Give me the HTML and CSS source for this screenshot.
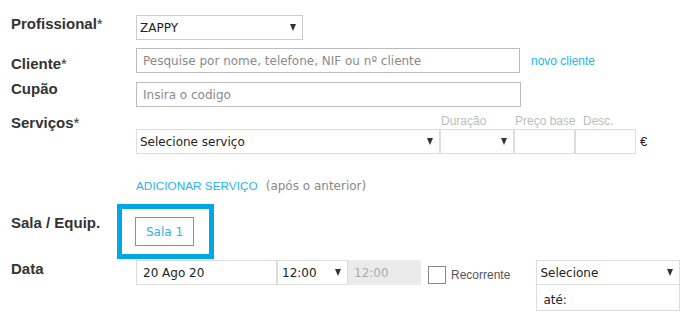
FILE: index.html
```html
<!DOCTYPE html>
<html lang="pt">
<head>
    <meta charset="UTF-8">
    <meta name="viewport" content="width=device-width, initial-scale=1.0">
    <title>Nova marcação</title>
    <link rel="stylesheet" href="styles.css">
</head>
<body>
    <div class="booking-form">
        <div class="row row-prof">
            <div class="label">Profissional<span class="req">*</span></div>
            <div class="field">
                <div class="select select-prof"><span>ZAPPY</span><i class="arrow"></i></div>
            </div>
        </div>

        <div class="row row-client">
            <div class="label">Cliente<span class="req">*</span></div>
            <div class="field field-center">
                <div class="input input-client placeholder">Pesquise por nome, telefone, NIF ou nº cliente</div>
                <a class="link new-client">novo cliente</a>
            </div>
        </div>

        <div class="row row-coupon">
            <div class="label">Cupão</div>
            <div class="field">
                <div class="input input-coupon placeholder">Insira o codigo</div>
            </div>
        </div>

        <div class="row row-services">
            <div class="label">Serviços<span class="req">*</span></div>
            <div class="field field-col">
                <div class="service-heads">
                    <span class="head head-service"></span>
                    <span class="head head-dur">Duração</span>
                    <span class="head head-price">Preço base</span>
                    <span class="head head-desc">Desc.</span>
                </div>
                <div class="service-line">
                    <div class="select light s-service"><span>Selecione serviço</span><i class="arrow"></i></div>
                    <div class="select light s-dur"><span></span><i class="arrow"></i></div>
                    <div class="input light s-price"></div>
                    <div class="input light s-desc"></div>
                    <span class="euro">€</span>
                </div>
            </div>
        </div>

        <div class="row row-add">
            <div class="label"></div>
            <div class="field">
                <a class="link add-service">ADICIONAR SERVIÇO</a>
                <span class="hint">(após o anterior)</span>
            </div>
        </div>

        <div class="row row-room">
            <div class="label">Sala / Equip.</div>
            <div class="field">
                <button class="room-btn highlighted">Sala 1</button>
            </div>
        </div>

        <div class="row row-date">
            <div class="label">Data</div>
            <div class="field">
                <div class="input light d-date">20 Ago 20</div>
                <div class="select light d-time"><span>12:00</span><i class="arrow"></i></div>
                <div class="input light d-end">12:00</div>
                <span class="checkbox"></span>
                <span class="recurring">Recorrente</span>
                <div class="repeat">
                    <div class="select light d-repeat"><span>Selecione</span><i class="arrow"></i></div>
                    <div class="input light d-until">até:</div>
                </div>
            </div>
        </div>
    </div>
</body>
</html>
```

FILE: styles.css
```css
body {
    margin: 0;
    padding: 0 0 0 11px;
    font-family: "DejaVu Sans", Verdana, sans-serif;
    font-size: 12px;
    color: #222;
    background: #fff;
}
.row {
    display: flex;
    align-items: flex-start;
}
.label {
    width: 125px;
    flex: none;
    font-family: "Liberation Sans", Arial, sans-serif;
    font-weight: bold;
    font-size: 15px;
    line-height: 17px;
    color: #333;
}
.req {
    font-weight: normal;
}
.field {
    display: flex;
    align-items: flex-start;
}
.field-center {
    align-items: center;
}
.field-col {
    flex-direction: column;
}

/* fake form controls */
.select, .input {
    box-sizing: border-box;
    height: 25px;
    border: 1px solid #bbb;
    display: flex;
    align-items: center;
    line-height: 14px;
    white-space: nowrap;
    background: #fff;
}
.select {
    justify-content: space-between;
    padding: 0 6px 0 3px;
    border-color: #ccc;
}
.input {
    padding: 0 6px;
}
.light {
    border-color: #ddd;
}
.placeholder {
    color: #8a8a8a;
}
.arrow {
    width: 0;
    height: 0;
    border-left: 3px solid transparent;
    border-right: 3px solid transparent;
    border-top: 7px solid #333;
}

.row-prof { margin-top: 15px; }
.select-prof { width: 167px; }

.row-client { margin-top: 8px; }
.row-client .label { padding-top: 7px; }
.input-client { width: 384px; }
.link {
    font-family: "Liberation Sans", Arial, sans-serif;
    color: #29b3e3;
    cursor: pointer;
}
.new-client {
    margin-left: 11px;
    font-size: 12px;
}

.row-coupon { margin-top: 9px; }
.row-coupon .label { margin-top: -2px; }
.input-coupon { width: 385px; }

.row-services { margin-top: 7px; }
.service-heads {
    display: flex;
    height: 15px;
    font-family: "Liberation Sans", Arial, sans-serif;
    font-size: 12px;
    line-height: 14px;
    color: #bdbdbd;
    white-space: nowrap;
}
.head { flex: none; }
.head-service { width: 304px; }
.head-dur { width: 74px; padding-left: 1px; box-sizing: border-box; }
.head-price { width: 61px; padding-left: 1px; box-sizing: border-box; }
.head-desc { padding-left: 8px; }
.service-line {
    display: flex;
    align-items: center;
}
.s-service { width: 304px; }
.s-dur { width: 74px; }
.s-price, .s-desc { width: 61px; }
.euro {
    margin-left: 4px;
    font-family: "Liberation Sans", Arial, sans-serif;
    font-size: 13px;
    color: #222;
}

.row-add { margin-top: 25px; }
.row-add .field { align-items: baseline; }
.add-service {
    font-size: 11.8px;
    line-height: 14px;
}
.hint {
    margin-left: 8px;
    color: #888;
}

.row-room { margin-top: 21px; }
.room-btn {
    position: relative;
    margin: 3px 0 0 -1px;
    width: 59px;
    height: 29px;
    padding: 0;
    border: 1px solid #2bb3e2;
    background: #fff;
    color: #2bb3e2;
    font-family: "DejaVu Sans", Verdana, sans-serif;
    font-size: 12px;
    cursor: pointer;
}
/* highlight frame drawn over the form */
.highlighted::after {
    content: "";
    position: absolute;
    left: -19px;
    top: -14px;
    width: 97px;
    height: 55px;
    box-sizing: border-box;
    border: 5.5px solid #00a6e6;
}

.row-date { margin-top: 14px; }
.d-date { width: 141px; }
.d-time { width: 71px; padding-left: 4px; }
.d-end {
    width: 73px;
    padding-left: 5px;
    background: #ebebeb;
    border-color: #ebebeb;
    color: #aaa;
}
.checkbox {
    box-sizing: border-box;
    width: 18px;
    height: 18px;
    margin: 6px 0 0 7px;
    border: 1px solid #888;
    background: #fff;
}
.recurring {
    margin: 8px 0 0 5px;
    font-family: "Liberation Sans", Arial, sans-serif;
    font-size: 12px;
    color: #555;
}
.repeat {
    display: flex;
    flex-direction: column;
    margin-left: 26px;
}
.d-repeat { width: 144px; padding-left: 3px; }
.d-until {
    width: 144px;
    padding-left: 6px;
    border-top: none;
    height: 26px;
    padding-top: 4px;
}
```
